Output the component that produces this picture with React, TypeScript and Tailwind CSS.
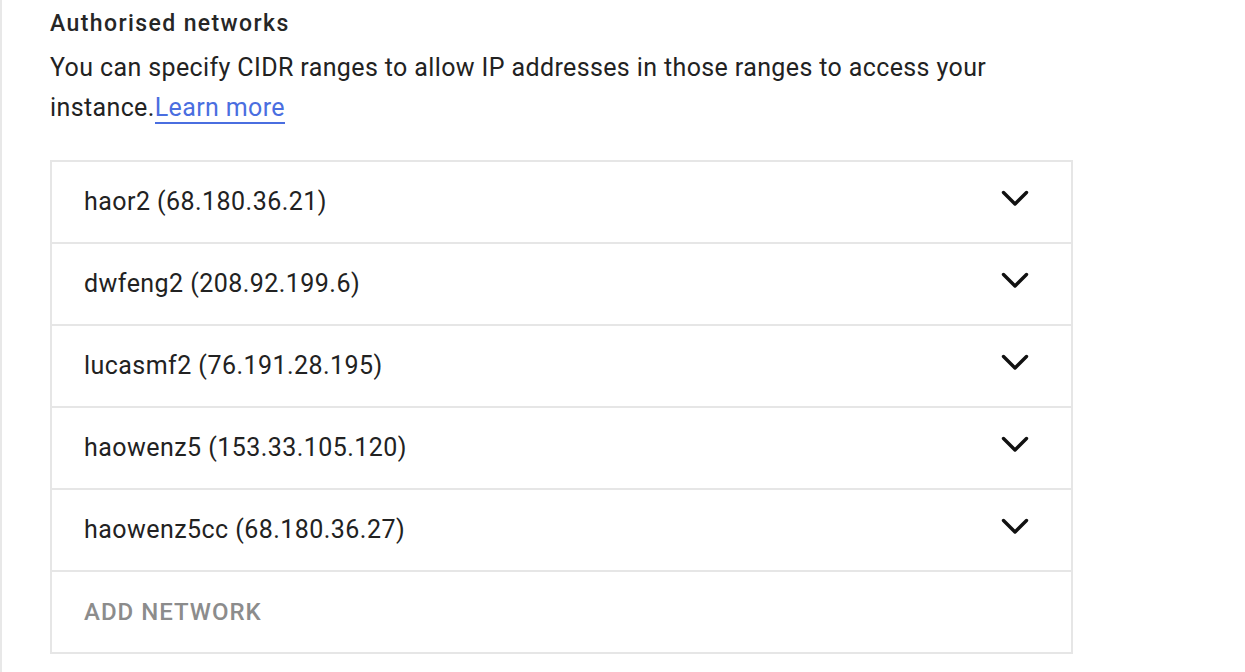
import React from "react";

const networks = [
    { name: "haor2", ip: "68.180.36.21" },
    { name: "dwfeng2", ip: "208.92.199.6" },
    { name: "lucasmf2", ip: "76.191.28.195" },
    { name: "haowenz5", ip: "153.33.105.120" },
    { name: "haowenz5cc", ip: "68.180.36.27" },
];

const Chevron = () => (
    <svg width="30" height="20" viewBox="0 0 30 20" fill="none" className="-mt-[6px] -mr-[2px]">
        <path d="M3.5 3.5 L15 15 L26.5 3.5" stroke="#111" strokeWidth="3.4" strokeLinecap="round" strokeLinejoin="round" />
    </svg>
);

const NetworkRow = ({ name, ip }: { name: string; ip: string }) => (
    <div className="flex items-center justify-between h-[82px] pl-[32px] pr-[43px] border-b-2 border-[#e6e6e6]">
        <span className="text-[25px] tracking-[0.45px] text-[#222]">{name} ({ip})</span>
        <Chevron />
    </div>
);

export default function App() {
    return (
        <div
            className="w-[1245px] h-[672px] bg-white border-l-2 border-[#e8e8e8] pl-[48px] overflow-hidden"
            style={{ fontFamily: "Roboto, 'Liberation Sans', sans-serif" }}
        >
            <h2 className="text-[23px] font-medium tracking-[1.4px] text-[#262626] pt-[8px] leading-[32px]">Authorised networks</h2>
            <p className="text-[25px] tracking-[0.38px] text-[#222] leading-[40px] mt-[8px] w-[1000px]">
                You can specify CIDR ranges to allow IP addresses in those ranges to access your instance.
                <a href="#" className="text-[#4a6ee0] border-b-2 border-[#4a6ee0]">Learn more</a>
            </p>
            <div className="mt-[32px] w-[1023px] border-2 border-[#e6e6e6]">
                {networks.map((n) => (
                    <NetworkRow key={n.name} name={n.name} ip={n.ip} />
                ))}
                <div className="flex items-center h-[80px] pl-[32px]">
                    <span className="text-[24px] font-medium text-[#8c8c8c] tracking-[1px]">ADD NETWORK</span>
                </div>
            </div>
        </div>
    );
}
